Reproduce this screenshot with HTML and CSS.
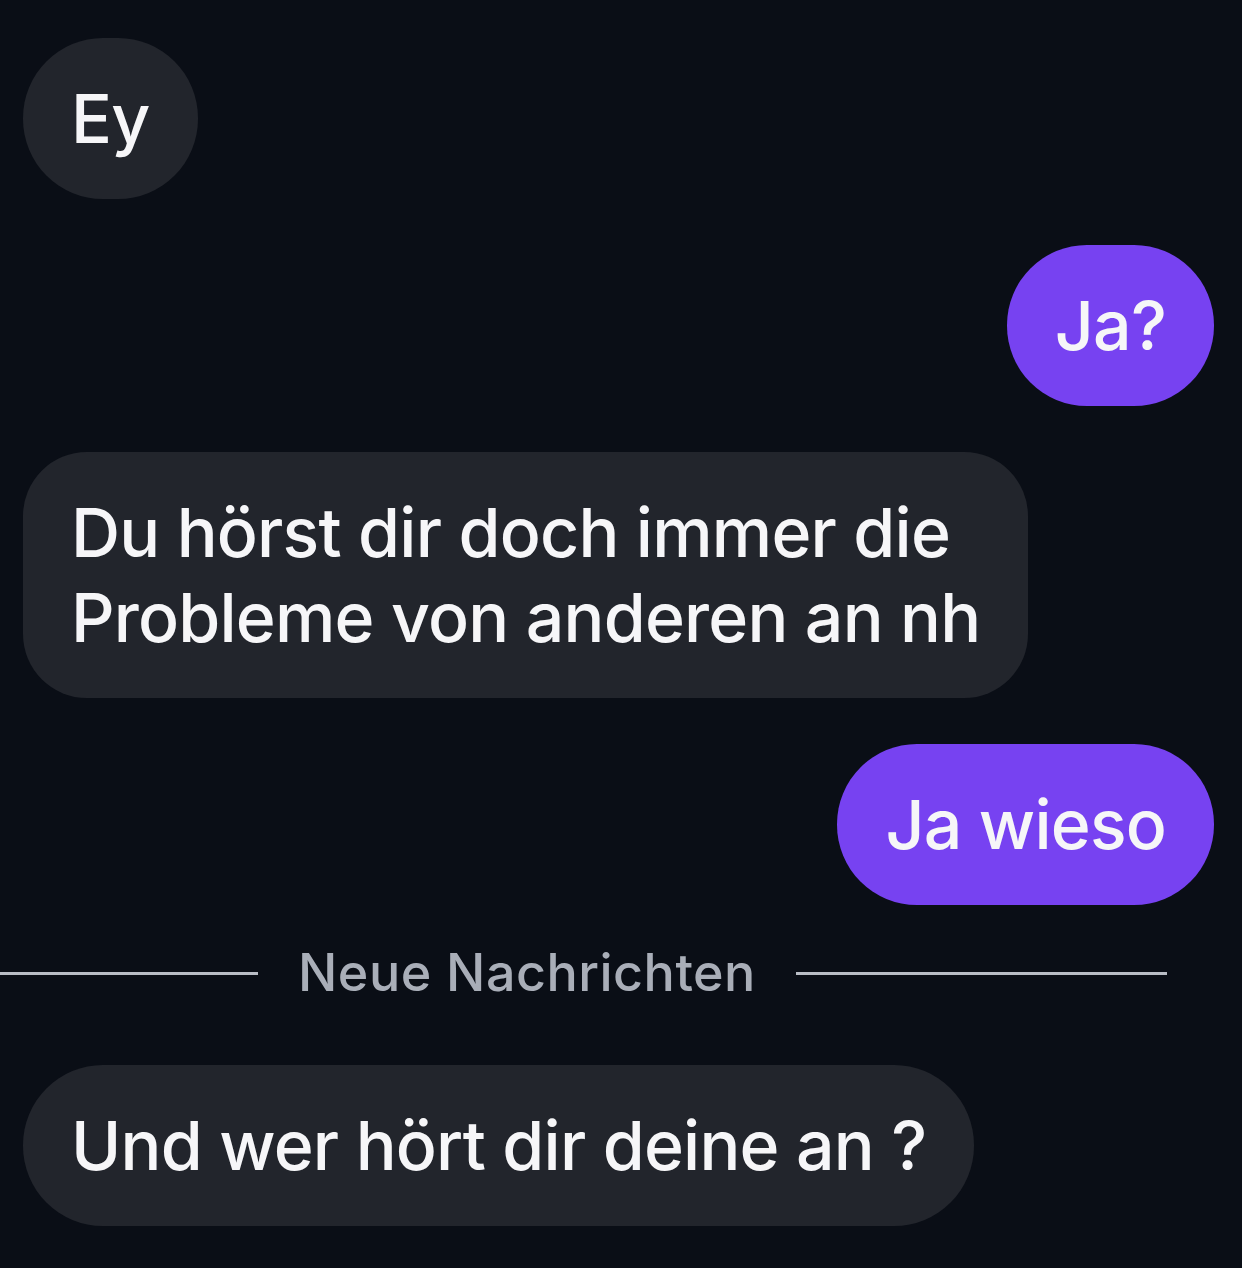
FILE: index.html
```html
<!DOCTYPE html>
<html lang="de">
<head>
  <meta charset="UTF-8">
  <meta name="viewport" content="width=device-width, initial-scale=1.0">
  <title>Chat</title>
  <link rel="stylesheet" href="styles.css">
</head>
<body>
  <div class="chat">
    <div class="msg in">Ey</div>
    <div class="msg out">Ja?</div>
    <div class="msg in multi">Du hörst dir doch immer die<br>Probleme von anderen an nh</div>
    <div class="msg out">Ja wieso</div>
    <div class="divider">
      <span class="line first"></span>
      <span class="label">Neue Nachrichten</span>
      <span class="line rest"></span>
    </div>
    <div class="msg in">Und wer hört dir deine an ?</div>
  </div>
</body>
</html>
```

FILE: styles.css
```css
body { margin: 0; background: #0a0e16; font-family: Inter, "Liberation Sans", sans-serif; overflow: hidden; }
.chat { display: flex; flex-direction: column; gap: 46px; padding: 38px 28px 0 23px; }
.msg { font-size: 68px; font-weight: 500; letter-spacing: -0.8px; line-height: 85px; color: #f6f6f8; padding: 38px 48px; border-radius: 80px; white-space: nowrap; }
.msg.in { align-self: flex-start; background: #22252c; }
.msg.out { align-self: flex-end; background: #7742f1; }
.msg.multi { border-radius: 64px; }
.divider { display: flex; align-items: center; gap: 40px; margin: 0 47px 24px -23px; height: 44px; }
.line { height: 3px; background: #b9bdc5; }
.line.first { width: 258px; }
.line.rest { flex: 1; }
.label { font-size: 52px; font-weight: 500; letter-spacing: 0.5px; color: #a9aeb8; line-height: 44px; }
```
